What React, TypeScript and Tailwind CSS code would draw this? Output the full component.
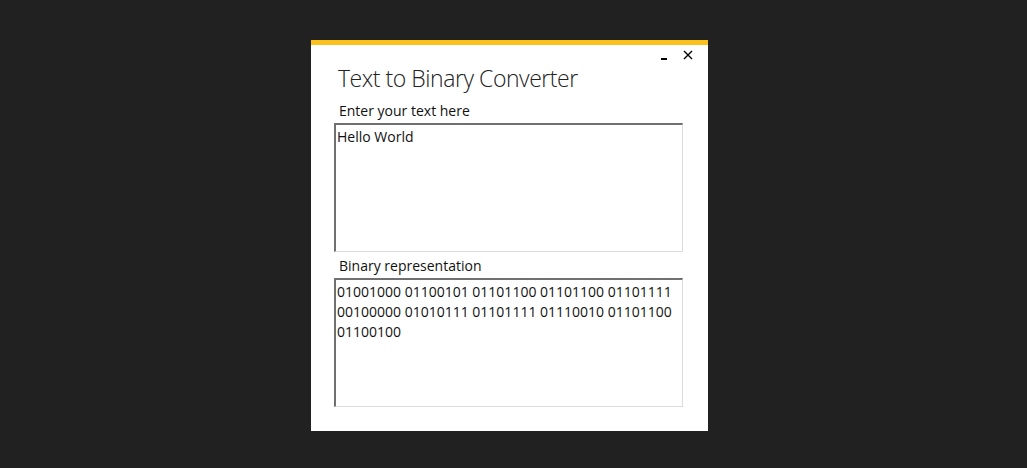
export default function App() {
  const binary =
    "01001000 01100101 01101100 01101100 01101111 00100000 01010111 01101111 01110010 01101100 01100100";

  return (
    <div className="min-h-[468px] w-full bg-[#212121] pt-[40px] pl-[311px] font-['Open_Sans',sans-serif] text-[#111]">
      <div className="flex h-[391px] w-[397px] flex-col bg-white">
        {/* accent bar */}
        <div className="h-[5px] bg-[#fcc21b]" />

        {/* window controls */}
        <div className="flex h-[18px] items-start justify-end gap-[16px] pr-[15px] pt-[4px]">
          <span className="mt-[9px] h-[2px] w-[6px] bg-black" />
          <svg width="10" height="10" viewBox="0 0 10 10" className="mt-[1px]">
            <path d="M1 1 L9 9 M9 1 L1 9" stroke="#000" strokeWidth="1.4" />
          </svg>
        </div>

        <div className="flex flex-col pl-[23px] pr-[25px]">
          <h1 className="ml-[4px] text-[23px] font-light leading-[30px] tracking-[-0.45px] text-[#222]">
            Text to Binary Converter
          </h1>

          <label className="ml-[5px] mt-[9px] text-[14px] leading-[18px]">Enter your text here</label>
          <div className="mt-[3px] h-[129px] border-t-2 border-l-2 border-r border-b border-t-[#707070] border-l-[#707070] border-r-[#dcdcdc] border-b-[#dcdcdc] px-[1px] pt-[2px] text-[14px] leading-[20px]">
            Hello World
          </div>

          <label className="ml-[5px] mt-[5px] text-[14px] leading-[18px]">Binary representation</label>
          <div className="mt-[3px] h-[129px] whitespace-pre-wrap border-t-2 border-l-2 border-r border-b border-t-[#707070] border-l-[#707070] border-r-[#dcdcdc] border-b-[#dcdcdc] px-[1px] pt-[2px] text-[14px] leading-[20px]">
            {binary}
          </div>
        </div>
      </div>
    </div>
  );
}
